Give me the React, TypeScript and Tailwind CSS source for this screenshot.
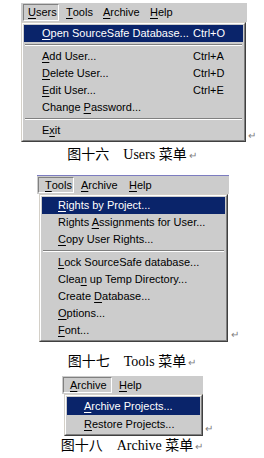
import React from "react";

function Label({ text }: { text: string }) {
  const i = text.indexOf("&");
  if (i < 0) return <>{text}</>;
  return (
    <>
      {text.slice(0, i)}
      <span className="underline decoration-1 underline-offset-[2px]">{text[i + 1]}</span>
      {text.slice(i + 2)}
    </>
  );
}

type Item = { label?: string; shortcut?: string; hl?: boolean; sep?: boolean };

function Row({ item, labelW, pl, h }: { item: Item; labelW: string; pl: string; h: string }) {
  if (item.sep) {
    return (
      <div className="h-[6px] flex items-center px-px">
        <div className="w-full border-t border-t-[#808080] border-b border-b-white" />
      </div>
    );
  }
  return (
    <div
      className={`flex items-center whitespace-nowrap ${h} ${pl} ${
        item.hl ? "bg-[#0a246a] text-white" : "text-black"
      }`}
    >
      <span className={labelW}>
        <Label text={item.label || ""} />
      </span>
      {item.shortcut && <span>{item.shortcut}</span>}
    </div>
  );
}

function Dropdown({ items, w, labelW, pl, h }: { items: Item[]; w: string; labelW: string; pl: string; h: string }) {
  return (
    <div
      className={`${w} bg-[#cccccc] border border-t-[#d4d0c8] border-l-[#d4d0c8] border-r-[#404040] border-b-[#404040]`}
    >
      <div className="border border-t-white border-l-white border-r-[#808080] border-b-[#808080] p-px">
        {items.map((it, k) => (
          <Row key={k} item={it} labelW={labelW} pl={pl} h={h} />
        ))}
      </div>
    </div>
  );
}

function Ret({ cls }: { cls: string }) {
  return <span className={`text-[#808080] text-[10px] leading-none ${cls}`}>↵</span>;
}

function Caption({ num, word, cls }: { num: string; word: string; cls: string }) {
  return (
    <div
      className={`h-[18px] leading-[18px] text-center text-black text-[14px] whitespace-pre [font-family:'Liberation_Serif','Noto_Sans_CJK_SC',serif] ${cls}`}
    >
      {num}
      {"\u3000"}
      {word} 菜单
      <Ret cls="ml-[2px]" />
    </div>
  );
}

const usersItems: Item[] = [
  { label: "&Open SourceSafe Database...", shortcut: "Ctrl+O", hl: true },
  { sep: true },
  { label: "&Add User...", shortcut: "Ctrl+A" },
  { label: "&Delete User...", shortcut: "Ctrl+D" },
  { label: "&Edit User...", shortcut: "Ctrl+E" },
  { label: "Change &Password..." },
  { sep: true },
  { label: "E&xit" },
];

const toolsItems: Item[] = [
  { label: "&Rights by Project...", hl: true },
  { label: "Rights &Assignments for User..." },
  { label: "&Copy User Rights..." },
  { sep: true },
  { label: "&Lock SourceSafe database..." },
  { label: "Clea&n up Temp Directory..." },
  { label: "Create &Database..." },
  { label: "&Options..." },
  { label: "&Font..." },
];

const archiveItems: Item[] = [
  { label: "&Archive Projects...", hl: true },
  { label: "&Restore Projects..." },
];

export default function App() {
  return (
    <div className="w-[264px] h-[458px] bg-white overflow-hidden text-[11px] [font-family:'Liberation_Sans',Arial,sans-serif] pt-[3px]">
      {/* Block 1: Users */}
      <div className="flex items-end">
        <div className="ml-[21px] w-[226px]">
          <div className="h-[19px] bg-[#cccccc] flex items-stretch">
            <div className="ml-[2px] mt-px mb-px w-[36px] pl-[4px] flex items-center border border-t-[#808080] border-l-[#808080] border-r-white border-b-white">
              <Label text="&Users" />
            </div>
            <div className="w-[37px] pl-[7px] flex items-center">
              <Label text="&Tools" />
            </div>
            <div className="w-[47px] pl-[7px] flex items-center">
              <Label text="&Archive" />
            </div>
            <div className="pl-[7px] flex items-center">
              <Label text="&Help" />
            </div>
          </div>
          <Dropdown items={usersItems} w="w-[225px]" labelW="w-[151px]" pl="pl-[18px]" h="h-[17px]" />
        </div>
        <Ret cls="ml-px mb-px" />
      </div>

      <Caption num="图十六" word="Users" cls="mt-[4px]" />

      {/* Block 2: Tools */}
      <div className="flex items-end mt-[11px]">
        <div className="ml-[37px] w-[192px]">
          <div className="h-[19px] bg-[#cccccc] border-t border-t-[#7c7cc0] flex items-stretch">
            <div className="ml-px mt-px mb-px w-[36px] pl-[6px] flex items-center border border-t-[#808080] border-l-[#808080] border-r-white border-b-white">
              <Label text="&Tools" />
            </div>
            <div className="w-[48px] pl-[7px] flex items-center">
              <Label text="&Archive" />
            </div>
            <div className="pl-[7px] flex items-center">
              <Label text="&Help" />
            </div>
          </div>
          <div className="ml-[2px]">
            <Dropdown items={toolsItems} w="w-[189px]" labelW="" pl="pl-[16px]" h="h-[17px]" />
          </div>
        </div>
        <Ret cls="ml-[2px] mb-[2px]" />
      </div>

      <Caption num="图十七" word="Tools" cls="mt-[11px]" />

      {/* Block 3: Archive */}
      <div className="flex items-end mt-[5px]">
        <div className="ml-[62px] w-[141px]">
          <div className="h-[18px] bg-[#cccccc] flex items-stretch">
            <div className="ml-px mt-px mb-px w-[49px] pl-[6px] flex items-center border border-t-[#808080] border-l-[#808080] border-r-white border-b-white">
              <Label text="&Archive" />
            </div>
            <div className="pl-[7px] flex items-center">
              <Label text="&Help" />
            </div>
          </div>
          <div className="ml-[2px]">
            <Dropdown items={archiveItems} w="w-[139px]" labelW="" pl="pl-[17px]" h="h-[18px]" />
          </div>
        </div>
        <Ret cls="ml-[2px] mb-[2px]" />
      </div>

      <Caption num="图十八" word="Archive" cls="mt-px" />
    </div>
  );
}
